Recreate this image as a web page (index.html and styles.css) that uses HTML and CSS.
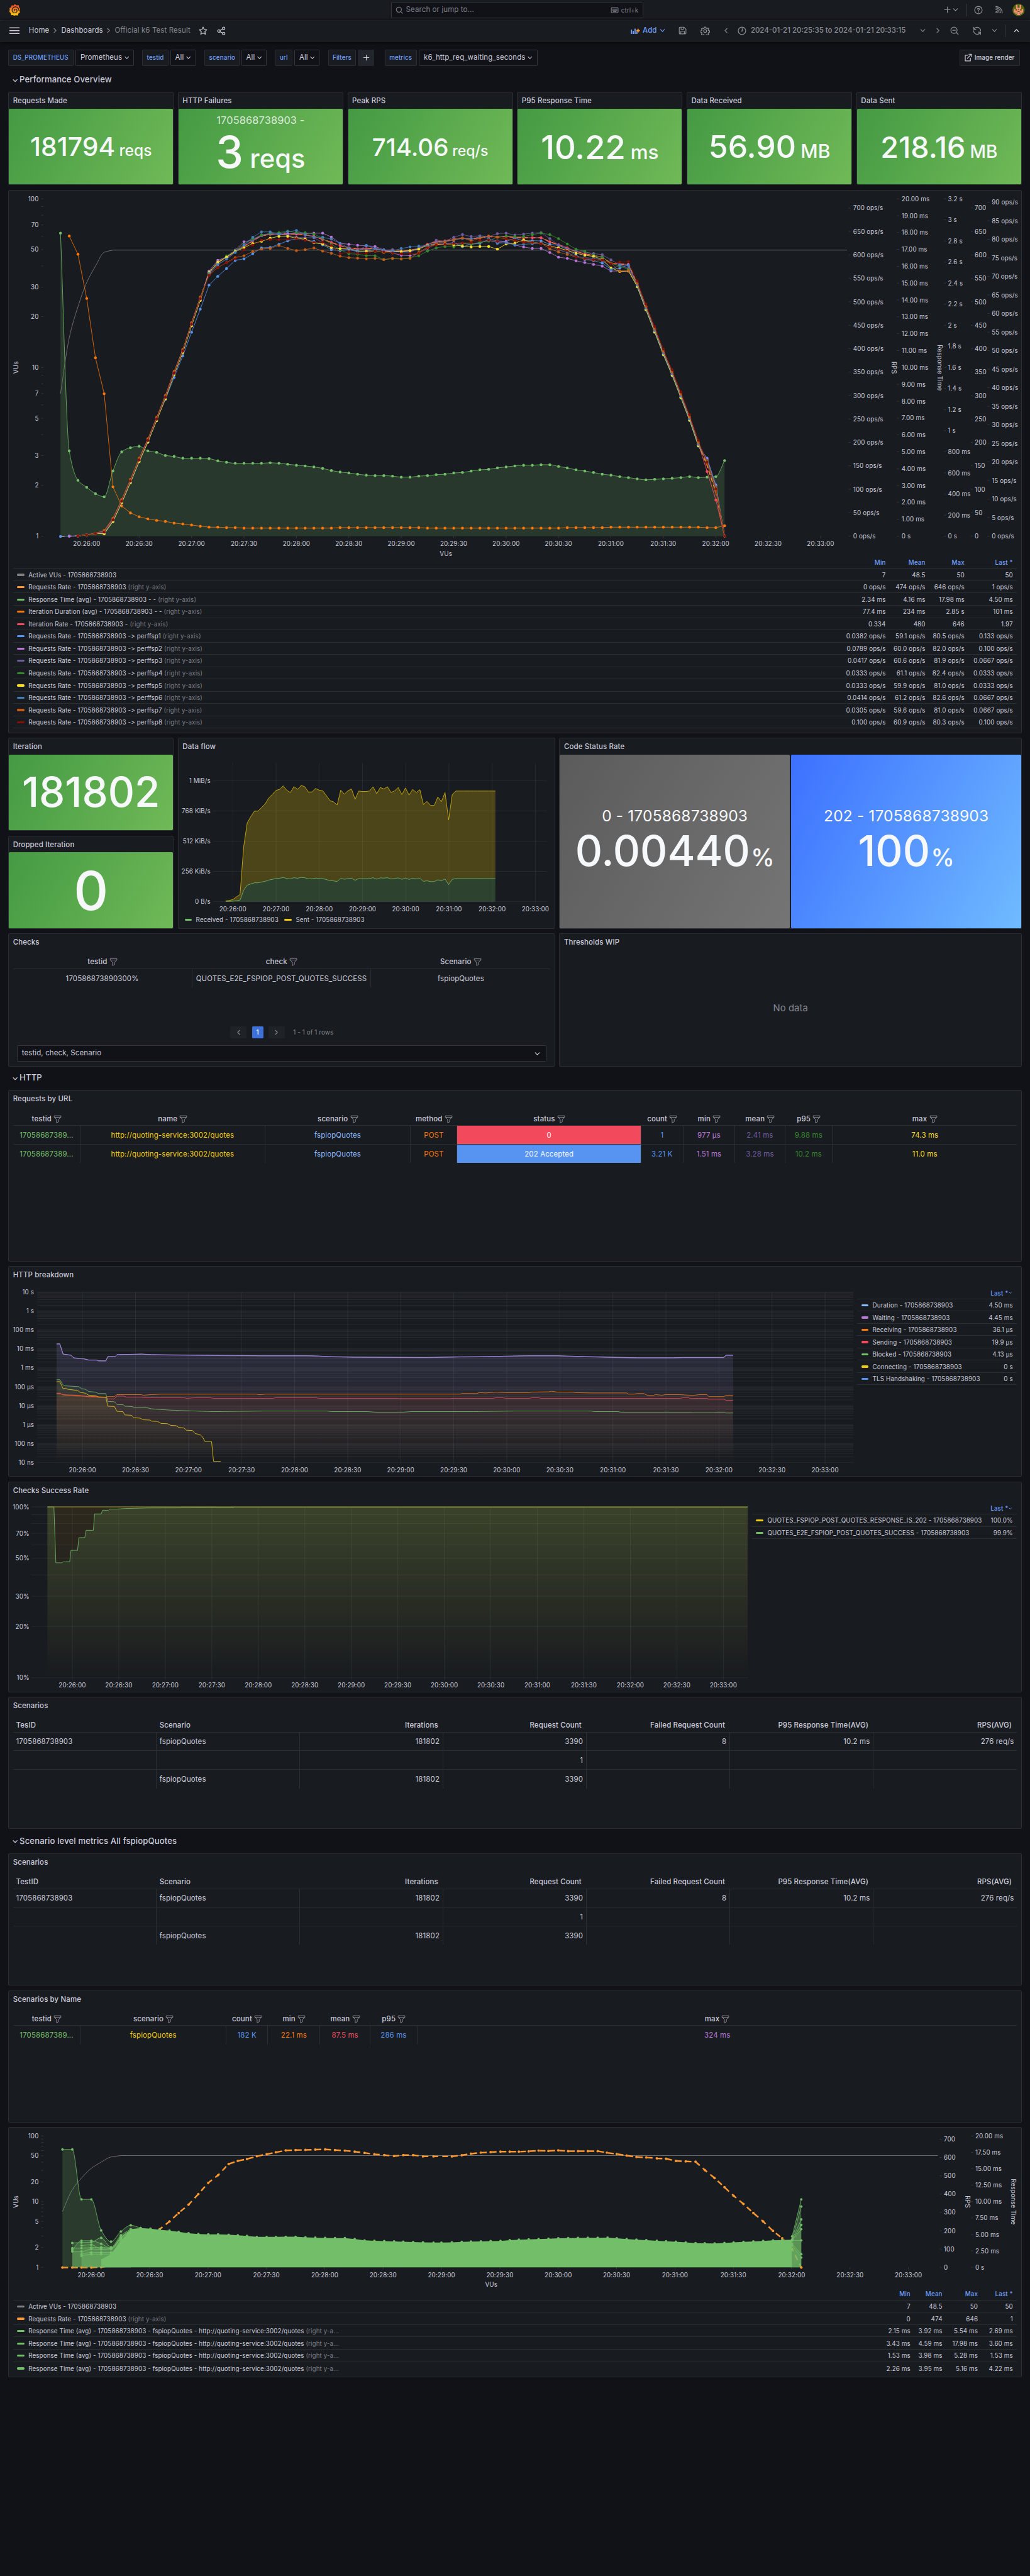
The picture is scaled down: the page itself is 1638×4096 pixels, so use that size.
FILE: index.html
```
<!DOCTYPE html>
<html lang="en">
<head>
<meta charset="utf-8">
<title>Official k6 Test Result - Dashboards - Grafana</title>
<link rel="stylesheet" href="styles.css">
</head>
<body>
<svg class="defs" aria-hidden="true">
  <symbol id="funnel" viewBox="0 0 16 16"><path d="M1.500 1.500h13v2.600L10 8.600V13l-4 2V8.600L1.500 4.100zM1.500 4.300h13"/></symbol>
  <symbol id="down" viewBox="0 0 16 16"><path d="M4 6l4 4 4-4"/></symbol>
  <symbol id="up" viewBox="0 0 16 16"><path d="M4 10l4-4 4 4"/></symbol>
  <symbol id="left" viewBox="0 0 16 16"><path d="M10 4L6 8l4 4"/></symbol>
  <symbol id="right" viewBox="0 0 16 16"><path d="M6 4l4 4-4 4"/></symbol>
</svg>
<div class="page">
<header class="topbar">
  <svg class="logo" viewBox="0 0 24 24">
    <defs><linearGradient id="lg" x1="0" y1="1" x2="0" y2="0"><stop offset="0" stop-color="#fcc20c"/><stop offset=".25" stop-color="#fbb00e"/><stop offset=".8" stop-color="#f05a28"/></linearGradient></defs>
    <path fill="url(#lg)" d="M12.500 0l2.500 2.600 5-.2.900 4.300 2.300 3.500-1 2.600.3 4.300-3 2.200-1.300 4-4-.6-3.500.9-2-1.200-4 .4-.5-4.300L1 15.500l1-3.500-.8-3.500L4.600 6.600 5.600 2.800l4 .1z"/>
    <path fill="none" stroke="#181b1f" stroke-width="1.500" stroke-linecap="round" d="M20.500 13.500C20.800 8.500 17 5.700 13.200 5.800c-4 .1-6.700 3.200-6.600 6.600.1 3.400 2.700 5.700 5.600 5.600 2.800-.1 4.600-2.100 4.500-4.300-.1-2.200-1.800-3.500-3.500-3.400-1.500.1-2.500 1.200-2.400 2.400.1.900.8 1.500 1.600 1.400"/>
  </svg>
  <div class="search">
    <svg class="ic" viewBox="0 0 16 16"><circle cx="7" cy="7" r="5.300"/><path d="M11 11l3.500 3.500"/></svg>
    <span>Search or jump to...</span>
    <svg class="ic kbd" viewBox="0 0 16 16"><rect x="1" y="2.500" width="14" height="11" rx="1.500"/><path d="M3.500 5.500h9M3.500 8h9" stroke-dasharray="1.500 1"/><path d="M5 11h6"/></svg>
    <span class="key">ctrl+k</span>
  </div>
  <div class="top-actions">
    <svg class="ic plus" viewBox="0 0 16 16"><path d="M8 2.500v11M2.500 8h11"/></svg>
    <svg class="ic dn"><use href="#down"/></svg>
    <i class="vr"></i>
    <svg class="ic help" viewBox="0 0 16 16"><circle cx="8" cy="8" r="6.800"/><path d="M6.200 6.500c0-2.400 3.600-2.300 3.600 0C9.800 7.800 8 7.800 8 9.300M8 11v.9"/></svg>
    <svg class="ic rss" viewBox="0 0 16 16"><circle cx="3.600" cy="12.600" r="1.500"/><path d="M2 7.500c3.500 0 6.500 3 6.500 6.500M2 4.500c5.300 0 9.500 4.200 9.500 9.500M2 1.600c7 0 12.400 5.400 12.400 12.400"/></svg>
    <svg class="avatar" viewBox="0 0 24 24"><circle cx="12" cy="12" r="12" fill="#4e6b0b"/><path fill="#ff8b7b" d="M7 2h3v6h4V2h3v8h-2v3h3v-3h3v7h-3v3h-3v2H9v-2H6v-3H3v-7h3v3h3v-3H7z"/><path fill="#4e6b0b" d="M10 14h4v2h-4zM8 17h2v2H8zM14 17h2v2h-2zM11 10h2v2h-2z"/></svg>
  </div>
</header>

<nav class="navbar">
  <svg class="menu" viewBox="0 0 20 14"><path d="M0 1.500h20M0 7h20M0 12.500h20"/></svg>
  <span class="crumb home">Home</span><svg class="ic sep"><use href="#right"/></svg>
  <span class="crumb dash">Dashboards</span><svg class="ic sep"><use href="#right"/></svg>
  <span class="crumb cur">Official k6 Test Result</span>
  <svg class="ic star" viewBox="0 0 16 16"><path d="M8 1.200l2 4.400 4.800.6-3.500 3.300.9 4.800L8 12l-4.200 2.300.9-4.800L1.200 6.200 6 5.600z"/></svg>
  <svg class="ic share" viewBox="0 0 16 16"><circle cx="3.600" cy="8.500" r="2.200"/><circle cx="12.300" cy="3.400" r="2.200"/><circle cx="12.300" cy="13" r="2.200"/><path d="M5.500 7.400l4.900-2.900M5.500 9.600l4.900 2.600"/></svg>
  <div class="tools">
    <svg class="addic" viewBox="0 0 18 14"><path d="M1.500 13.500V5M5 13.500V7.500M8.500 13.500V3M12 13.500V9" stroke="#6e9fff" stroke-width="2.300"/><path d="M14.300 3.500v7M11 7h6.800" stroke="#ff9830" stroke-width="2.300"/></svg>
    <span class="add">Add</span><svg class="ic addn"><use href="#down"/></svg>
    <svg class="ic save" viewBox="0 0 16 16"><path d="M1.500 3a1.500 1.500 0 0 1 1.500-1.500h7.500l4 4V13a1.500 1.500 0 0 1-1.500 1.500H3A1.500 1.500 0 0 1 1.500 13zM5 1.500v4h5v-4M4.500 14.500v-5h7v5"/></svg>
    <svg class="ic gear" viewBox="0 0 16 16"><circle cx="8" cy="8" r="2.500"/><path d="M6.800 1.200h2.400l.4 2 1.300.6 1.800-1.100 1.600 1.600-1.100 1.800.6 1.200 2 .5v2.300l-2 .5-.6 1.300 1.100 1.800-1.600 1.600-1.800-1.100-1.300.6-.4 2H6.800l-.5-2-1.200-.6-1.900 1.100-1.600-1.600 1.100-1.800-.6-1.300-1.900-.5V7.800l1.900-.5.600-1.200-1.100-1.800 1.600-1.600 1.900 1.100 1.200-.6z"/></svg>
    <svg class="ic lt"><use href="#left"/></svg>
    <svg class="ic clock" viewBox="0 0 16 16"><circle cx="8" cy="8" r="6.800"/><path d="M8.500 4v4.500H6.500"/></svg>
    <span class="range">2024-01-21 20:25:35 to 2024-01-21 20:33:15</span>
    <svg class="ic rdn"><use href="#down"/></svg>
    <svg class="ic rt"><use href="#right"/></svg>
    <svg class="ic zo" viewBox="0 0 16 16"><circle cx="7" cy="7" r="5.700"/><path d="M11.200 11.200l3.600 3.600M4.500 7h5"/></svg>
    <svg class="ic sync" viewBox="0 0 16 16"><path d="M1.800 1.500v4h4M2 5.500C4 1 10 .3 13 4c1 1.300 1.400 2.500 1.400 4M14.200 14.500v-4h-4M14 10.500C12 15 6 15.700 3 12c-1-1.300-1.400-2.500-1.400-4"/></svg>
    <svg class="ic sdn"><use href="#down"/></svg>
    <i class="vr"></i>
    <svg class="ic upc"><use href="#up"/></svg>
  </div>
</nav>

<main>
  <div class="vars">
    <span class="lab" style="width:127px">DS_PROMETHEUS</span><span class="val" style="width:113px">Prometheus<svg class="ic"><use href="#down"/></svg></span>
    <span class="lab" style="width:51px">testid</span><span class="val" style="width:50px">All<svg class="ic"><use href="#down"/></svg></span>
    <span class="lab" style="width:68px">scenario</span><span class="val" style="width:49px">All<svg class="ic"><use href="#down"/></svg></span>
    <span class="lab" style="width:34px">url</span><span class="val" style="width:49px">All<svg class="ic"><use href="#down"/></svg></span>
    <span class="lab" style="width:54px">Filters</span><span class="plusbtn"><svg class="ic" viewBox="0 0 16 16"><path d="M8 3v10M3 8h10"/></svg></span>
    <span class="lab" style="width:63px">metrics</span><span class="val" style="width:230px">k6_http_req_waiting_seconds<svg class="ic"><use href="#down"/></svg></span>
    <a class="render"><svg class="ic" viewBox="0 0 16 16"><path d="M7 3.500H2.500v11h10V9M9.500 1.500h5v5M14 2L6.500 9.500"/></svg>Image render</a>
  </div>

  <h2 class="row-title first"><svg class="ic"><use href="#down"/></svg>Performance Overview</h2>

  <div class="stats">
    <section class="panel stat"><h3>Requests Made</h3><div class="tile green"><p class="v s50">181794<small>reqs</small></p></div></section>
    <section class="panel stat"><h3>HTTP Failures</h3><div class="tile green"><p class="cap">1705868738903 -</p><p class="v s85">3<small>reqs</small></p></div></section>
    <section class="panel stat"><h3>Peak RPS</h3><div class="tile green"><p class="v s47">714.06<small>req/s</small></p></div></section>
    <section class="panel stat"><h3>P95 Response Time</h3><div class="tile green"><p class="v s64">10.22<small>ms</small></p></div></section>
    <section class="panel stat"><h3>Data Received</h3><div class="tile green"><p class="v s61">56.90<small>MB</small></p></div></section>
    <section class="panel stat"><h3>Data Sent</h3><div class="tile green"><p class="v s57">218.16<small>MB</small></p></div></section>
  </div>

  <section class="panel overview">
    <svg id="overview" class="chart" viewBox="17 369 1966 711" height="711"></svg>
    <div class="legend four">
      <div class="lr head"><span></span><b>Min</b><b>Mean</b><b>Max</b><b>Last *</b></div>
      <div class="lr"><span><i style="background:#808080"></i>Active VUs - 1705868738903</span><b>7</b><b>48.5</b><b>50</b><b>50</b></div>
      <div class="lr"><span><i style="background:#ff9830"></i>Requests Rate - 1705868738903 <em>(right y-axis)</em></span><b>0 ops/s</b><b>474 ops/s</b><b>646 ops/s</b><b>1 ops/s</b></div>
      <div class="lr"><span><i style="background:#73bf69"></i>Response Time (avg) - 1705868738903 - - <em>(right y-axis)</em></span><b>2.34 ms</b><b>4.16 ms</b><b>17.98 ms</b><b>4.50 ms</b></div>
      <div class="lr"><span><i style="background:#ff780a"></i>Iteration Duration (avg) - 1705868738903 - - <em>(right y-axis)</em></span><b>77.4 ms</b><b>234 ms</b><b>2.85 s</b><b>101 ms</b></div>
      <div class="lr"><span><i style="background:#f2495c"></i>Iteration Rate - 1705868738903 - <em>(right y-axis)</em></span><b>0.334</b><b>480</b><b>646</b><b>1.97</b></div>
      <div class="lr"><span><i style="background:#5794f2"></i>Requests Rate - 1705868738903 -&gt; perffsp1 <em>(right y-axis)</em></span><b>0.0382 ops/s</b><b>59.1 ops/s</b><b>80.5 ops/s</b><b>0.133 ops/s</b></div>
      <div class="lr"><span><i style="background:#b877d9"></i>Requests Rate - 1705868738903 -&gt; perffsp2 <em>(right y-axis)</em></span><b>0.0789 ops/s</b><b>60.0 ops/s</b><b>82.0 ops/s</b><b>0.100 ops/s</b></div>
      <div class="lr"><span><i style="background:#705da0"></i>Requests Rate - 1705868738903 -&gt; perffsp3 <em>(right y-axis)</em></span><b>0.0417 ops/s</b><b>60.6 ops/s</b><b>81.9 ops/s</b><b>0.0667 ops/s</b></div>
      <div class="lr"><span><i style="background:#37872d"></i>Requests Rate - 1705868738903 -&gt; perffsp4 <em>(right y-axis)</em></span><b>0.0333 ops/s</b><b>61.1 ops/s</b><b>82.4 ops/s</b><b>0.0333 ops/s</b></div>
      <div class="lr"><span><i style="background:#fade2a"></i>Requests Rate - 1705868738903 -&gt; perffsp5 <em>(right y-axis)</em></span><b>0.0333 ops/s</b><b>59.9 ops/s</b><b>81.0 ops/s</b><b>0.0333 ops/s</b></div>
      <div class="lr"><span><i style="background:#447ebc"></i>Requests Rate - 1705868738903 -&gt; perffsp6 <em>(right y-axis)</em></span><b>0.0414 ops/s</b><b>61.2 ops/s</b><b>82.6 ops/s</b><b>0.0667 ops/s</b></div>
      <div class="lr"><span><i style="background:#c15c17"></i>Requests Rate - 1705868738903 -&gt; perffsp7 <em>(right y-axis)</em></span><b>0.0305 ops/s</b><b>59.6 ops/s</b><b>81.0 ops/s</b><b>0.0667 ops/s</b></div>
      <div class="lr"><span><i style="background:#890f02"></i>Requests Rate - 1705868738903 -&gt; perffsp8 <em>(right y-axis)</em></span><b>0.100 ops/s</b><b>60.9 ops/s</b><b>80.3 ops/s</b><b>0.100 ops/s</b></div>
    </div>
  </section>

  <div class="mid">
    <div class="iters">
      <section class="panel stat"><h3>Iteration</h3><div class="tile green"><p class="v s80">181802</p></div></section>
      <section class="panel stat"><h3>Dropped Iteration</h3><div class="tile green"><p class="v s104">0</p></div></section>
    </div>
    <section class="panel">
      <h3>Data flow</h3>
      <svg id="flow" class="chart" viewBox="346 1465 731 311" height="311"></svg>
      <div class="inline-legend"><i style="background:#73bf69"></i><span class="l1">Received - 1705868738903</span><i style="background:#f2cc0c"></i><span>Sent - 1705868738903</span></div>
    </section>
    <section class="panel stat">
      <h3>Code Status Rate</h3>
      <div class="codes">
        <div class="tile grey"><p class="cap30">0 - 1705868738903</p><p class="v s82">0.00440<small>%</small></p></div>
        <div class="tile blue"><p class="cap30">202 - 1705868738903</p><p class="v s82">100<small>%</small></p></div>
      </div>
    </section>
  </div>

  <div class="checks">
    <section class="panel">
      <h3>Checks</h3>
      <div class="table c3">
        <div class="tr th"><span>testid<svg class="fn"><use href="#funnel"/></svg></span><span>check<svg class="fn"><use href="#funnel"/></svg></span><span>Scenario<svg class="fn"><use href="#funnel"/></svg></span></div>
        <div class="tr last"><span>170586873890300%</span><span>QUOTES_E2E_FSPIOP_POST_QUOTES_SUCCESS</span><span>fspiopQuotes</span></div>
      </div>
      <div class="pager"><span class="pg"><svg class="ic"><use href="#left"/></svg></span><span class="pg on">1</span><span class="pg"><svg class="ic"><use href="#right"/></svg></span><span class="info">1 - 1 of 1 rows</span></div>
      <div class="select">testid, check, Scenario<svg class="ic"><use href="#down"/></svg></div>
    </section>
    <section class="panel">
      <h3>Thresholds WIP</h3>
      <div class="nodata">No data</div>
    </section>
  </div>

  <h2 class="row-title http"><svg class="ic"><use href="#down"/></svg>HTTP</h2>

  <section class="panel urls">
    <h3>Requests by URL</h3>
    <div class="table c10">
      <div class="tr th"><span>testid<svg class="fn"><use href="#funnel"/></svg></span><span>name<svg class="fn"><use href="#funnel"/></svg></span><span>scenario<svg class="fn"><use href="#funnel"/></svg></span><span>method<svg class="fn"><use href="#funnel"/></svg></span><span>status<svg class="fn"><use href="#funnel"/></svg></span><span>count<svg class="fn"><use href="#funnel"/></svg></span><span>min<svg class="fn"><use href="#funnel"/></svg></span><span>mean<svg class="fn"><use href="#funnel"/></svg></span><span>p95<svg class="fn"><use href="#funnel"/></svg></span><span>max<svg class="fn"><use href="#funnel"/></svg></span></div>
      <div class="tr"><span class="t-green">17058687389...</span><span class="t-yellow">http://quoting-service:3002/quotes</span><span class="t-sky">fspiopQuotes</span><span class="t-orange">POST</span><span class="bg-red">0</span><span class="t-blue">1</span><span class="t-violet">977 µs</span><span class="t-purple">2.41 ms</span><span class="t-dgreen">9.88 ms</span><span class="t-lemon">74.3 ms</span></div>
      <div class="tr last"><span class="t-green">17058687389...</span><span class="t-yellow">http://quoting-service:3002/quotes</span><span class="t-sky">fspiopQuotes</span><span class="t-orange">POST</span><span class="bg-blue">202 Accepted</span><span class="t-blue">3.21 K</span><span class="t-violet">1.51 ms</span><span class="t-purple">3.28 ms</span><span class="t-dgreen">10.2 ms</span><span class="t-lemon">11.0 ms</span></div>
    </div>
  </section>

  <section class="panel breakdown">
    <h3>HTTP breakdown</h3>
    <div class="split">
      <svg id="breakdown" class="chart" viewBox="17 2491 1647 375" width="1647" height="375"></svg>
      <div class="legend one">
        <div class="lr head"><span></span><b>Last *<svg class="ic"><use href="#down"/></svg></b></div>
        <div class="lr"><span><i style="background:#8ab8ff"></i>Duration - 1705868738903</span><b>4.50 ms</b></div>
        <div class="lr"><span><i style="background:#b877d9"></i>Waiting - 1705868738903</span><b>4.45 ms</b></div>
        <div class="lr"><span><i style="background:#ff780a"></i>Receiving - 1705868738903</span><b>36.1 µs</b></div>
        <div class="lr"><span><i style="background:#f2495c"></i>Sending - 1705868738903</span><b>19.9 µs</b></div>
        <div class="lr"><span><i style="background:#73bf69"></i>Blocked - 1705868738903</span><b>4.13 µs</b></div>
        <div class="lr"><span><i style="background:#f2cc0c"></i>Connecting - 1705868738903</span><b>0 s</b></div>
        <div class="lr"><span><i style="background:#5794f2"></i>TLS Handshaking - 1705868738903</span><b>0 s</b></div>
      </div>
    </div>
  </section>

  <section class="panel success">
    <h3>Checks Success Rate</h3>
    <div class="split">
      <svg id="success" class="chart" viewBox="17 2909 1443 375" width="1443" height="375"></svg>
      <div class="legend one">
        <div class="lr head"><span></span><b>Last *<svg class="ic"><use href="#down"/></svg></b></div>
        <div class="lr"><span><i style="background:#f2cc0c"></i>QUOTES_FSPIOP_POST_QUOTES_RESPONSE_IS_202 - 1705868738903</span><b>100.0%</b></div>
        <div class="lr"><span><i style="background:#73bf69"></i>QUOTES_E2E_FSPIOP_POST_QUOTES_SUCCESS - 1705868738903</span><b>99.9%</b></div>
      </div>
    </div>
  </section>

  <section class="panel scen">
    <h3>Scenarios</h3>
    <div class="table c7">
      <div class="tr th"><span>TesID</span><span>Scenario</span><span>Iterations</span><span>Request Count</span><span>Failed Request Count</span><span>P95 Response Time(AVG)</span><span>RPS(AVG)</span></div>
      <div class="tr"><span>1705868738903</span><span>fspiopQuotes</span><span>181802</span><span>3390</span><span>8</span><span>10.2 ms</span><span>276 req/s</span></div>
      <div class="tr"><span></span><span></span><span></span><span>1</span><span></span><span></span><span></span></div>
      <div class="tr last"><span></span><span>fspiopQuotes</span><span>181802</span><span>3390</span><span></span><span></span><span></span></div>
    </div>
  </section>

  <h2 class="row-title lvl"><svg class="ic"><use href="#down"/></svg>Scenario level metrics All fspiopQuotes</h2>

  <section class="panel scen">
    <h3>Scenarios</h3>
    <div class="table c7">
      <div class="tr th"><span>TestID</span><span>Scenario</span><span>Iterations</span><span>Request Count</span><span>Failed Request Count</span><span>P95 Response Time(AVG)</span><span>RPS(AVG)</span></div>
      <div class="tr"><span>1705868738903</span><span>fspiopQuotes</span><span>181802</span><span>3390</span><span>8</span><span>10.2 ms</span><span>276 req/s</span></div>
      <div class="tr"><span></span><span></span><span></span><span>1</span><span></span><span></span><span></span></div>
      <div class="tr last"><span></span><span>fspiopQuotes</span><span>181802</span><span>3390</span><span></span><span></span><span></span></div>
    </div>
  </section>

  <section class="panel scen gap">
    <h3>Scenarios by Name</h3>
    <div class="table cn">
      <div class="tr th"><span>testid<svg class="fn"><use href="#funnel"/></svg></span><span>scenario<svg class="fn"><use href="#funnel"/></svg></span><span>count<svg class="fn"><use href="#funnel"/></svg></span><span>min<svg class="fn"><use href="#funnel"/></svg></span><span>mean<svg class="fn"><use href="#funnel"/></svg></span><span>p95<svg class="fn"><use href="#funnel"/></svg></span><span>max<svg class="fn"><use href="#funnel"/></svg></span></div>
      <div class="tr last"><span class="t-green">17058687389...</span><span class="t-yellow">fspiopQuotes</span><span class="t-blue">182 K</span><span class="t-orange">22.1 ms</span><span class="t-red">87.5 ms</span><span class="t-blue">286 ms</span><span class="t-violet">324 ms</span></div>
    </div>
  </section>

  <section class="panel perurl">
    <svg id="perurl" class="chart" viewBox="17 4131 1966 311" height="311"></svg>
    <div class="legend fourb">
      <div class="lr head"><span></span><b>Min</b><b>Mean</b><b>Max</b><b>Last *</b></div>
      <div class="lr"><span><i style="background:#808080"></i>Active VUs - 1705868738903</span><b>7</b><b>48.5</b><b>50</b><b>50</b></div>
      <div class="lr"><span><i style="background:#ff9830"></i>Requests Rate - 1705868738903 <em>(right y-axis)</em></span><b>0</b><b>474</b><b>646</b><b>1</b></div>
      <div class="lr"><span class="long"><i style="background:#73bf69"></i>Response Time (avg) - 1705868738903 - fspiopQuotes - http://quoting-service:3002/quotes <em>(right y-a...</em></span><b>2.15 ms</b><b>3.92 ms</b><b>5.54 ms</b><b>2.69 ms</b></div>
      <div class="lr"><span class="long"><i style="background:#73bf69"></i>Response Time (avg) - 1705868738903 - fspiopQuotes - http://quoting-service:3002/quotes <em>(right y-a...</em></span><b>3.43 ms</b><b>4.59 ms</b><b>17.98 ms</b><b>3.60 ms</b></div>
      <div class="lr"><span class="long"><i style="background:#73bf69"></i>Response Time (avg) - 1705868738903 - fspiopQuotes - http://quoting-service:3002/quotes <em>(right y-a...</em></span><b>1.53 ms</b><b>3.98 ms</b><b>5.28 ms</b><b>1.53 ms</b></div>
      <div class="lr end"><span class="long"><i style="background:#73bf69"></i>Response Time (avg) - 1705868738903 - fspiopQuotes - http://quoting-service:3002/quotes <em>(right y-a...</em></span><b>2.26 ms</b><b>3.95 ms</b><b>5.16 ms</b><b>4.22 ms</b></div>
    </div>
  </section>
</main>
</div>
<script src="charts.js"></script>
</body>
</html>
```
FILE: styles.css
```
* { box-sizing: border-box; }
html { background: #111217; }
body { margin: 0; width: 1638px; height: 4096px; overflow: hidden; background: #111217; }
.page {
  width: 2000px; height: 5000px; zoom: 0.819; overflow: hidden; color: #ccccdc;
  font: 400 14px/1.5 Inter, "Liberation Sans", sans-serif;
  letter-spacing: 0.01071em;
}
h2, h3, p { margin: 0; }
.defs { display: none; }
svg { display: block; flex: none; }
.ic { width: 16px; height: 16px; fill: none; stroke: currentColor; stroke-width: 1.4; stroke-linecap: round; stroke-linejoin: round; }
.fn { width: 16px; height: 16px; margin-left: 4px; fill: none; stroke: #8e8f99; stroke-width: 1.2; stroke-linejoin: round; }

/* header */
.topbar { height: 40px; background: #181b1f; border-bottom: 1px solid #2d2f34; display: flex; align-items: center; padding-left: 17px; }
.logo { width: 23px; height: 24px; }
.search { margin-left: 719px; width: 490px; height: 31px; background: #111217; border: 1px solid #35373d; border-radius: 2px; display: flex; align-items: center; color: #7f808b; padding: 0 8px; }
.search .ic { width: 15px; height: 15px; margin-right: 5px; }
.search .kbd { margin-left: auto; width: 16px; }
.search .key { font-size: 12px; }
.top-actions { flex: 1; display: flex; align-items: center; color: #8e8f99; }
.plus { margin-left: 582px; }
.dn { margin-left: 1px; }
.top-actions .vr { margin-left: 13px; }
.vr { width: 1px; height: 24px; background: #35373d; }
.help { width: 17px; height: 17px; margin-left: 14px; }
.rss { margin-left: 23px; }
.avatar { width: 24px; height: 24px; margin-left: 18px; }

.navbar { height: 41px; background: #181b1f; border-bottom: 1px solid #2d2f34; display: flex; align-items: center; padding-left: 18px; box-shadow: 0 1px 8px #000; }
.menu { width: 20px; height: 14px; stroke: #ccccdc; stroke-width: 2; margin-right: 18px; }
.sep { margin: 0 4px; color: #8e8f99; }
.home { width: 39px; }
.dash { width: 80px; }
.cur { width: 146px; color: #85868f; }
.crumb { white-space: nowrap; }
.star { margin-left: 17px; width: 17px; height: 17px; }
.share { margin-left: 18px; width: 17px; height: 17px; }
.tools { flex: 1; display: flex; align-items: center; margin-left: 787px; color: #8e8f99; }
.addic { width: 18px; height: 14px; fill: none; }
.add { color: #6e9fff; font-weight: 500; width: 29px; margin-left: 5px; }
.addn { color: #6e9fff; margin-left: 1px; }
.save { margin-left: 24px; }
.gear { margin-left: 27px; width: 18px; height: 18px; }
.lt { margin-left: 23px; }
.clock { margin-left: 14px; width: 17px; height: 17px; }
.range { margin-left: 9px; width: 316px; font-weight: 500; white-space: nowrap; letter-spacing: 0; }
.rdn { margin-left: 10px; }
.rt { margin-left: 13px; }
.zo { margin-left: 16px; width: 17px; height: 17px; }
.sync { margin-left: 27px; width: 17px; height: 17px; }
.sdn { margin-left: 18px; }
.tools .vr { margin-left: 12px; }
.upc { margin-left: 13px; color: #ccccdc; stroke-width: 1.7; }

main { padding: 15px 16px 0; }
.vars { display: flex; height: 32px; }
.lab, .val, .render { height: 32px; border-radius: 2px; display: flex; align-items: center; padding-left: 8px; white-space: nowrap; border: 1px solid #2c2e33; }
.lab { background: #181b1f; color: #6e9fff; font-size: 12px; font-weight: 500; margin-right: 4px; }
.val { background: #111217; border-color: #34363c; margin-right: 16px; }
.val .ic { width: 14px; height: 14px; margin-left: 2px; }
.plusbtn { width: 32px; height: 32px; background: #22252b; border-radius: 2px; margin-right: 20px; display: flex; align-items: center; justify-content: center; }
.render { margin-left: auto; margin-right: 4px; width: 117px; background: #181b1f; font-size: 12px; font-weight: 500; }
.render .ic { margin-right: 4px; }

.row-title { display: flex; align-items: center; font-size: 16px; font-weight: 500; padding-left: 6px; }
.row-title .ic { width: 15px; height: 15px; margin-right: 1px; margin-top: 2px; stroke-width: 1.7; }
.first { height: 50.3px; padding-top: 4px; }
.http { height: 46.5px; }
.lvl { height: 47px; }

.panel { background: #181b1f; border: 1px solid #2b2e33; border-radius: 2px; }
.panel h3 { height: 32px; line-height: 32px; font-size: 14px; font-weight: 500; padding-left: 8px; }

/* stat tiles */
.stats { display: grid; grid-template-columns: repeat(6, 1fr); gap: 8px; height: 181px; }
.stat { display: flex; flex-direction: column; }
.tile { flex: 1; border-radius: 2px; display: flex; flex-direction: column; align-items: center; justify-content: center; color: #f7f8fa; white-space: nowrap; padding-top: 2px; }
.green { background: linear-gradient(120deg, #449a43, #70b957); }
.grey { background: linear-gradient(120deg, #5b5b5b, #757575); }
.blue { background: linear-gradient(120deg, #3c70ff, #70bbff); }
.v { line-height: 1.2; font-weight: 500; letter-spacing: 0; }
.v small { font-size: 60%; margin-left: 0.25em; }
.cap { font-size: 20px; line-height: 24px; color: rgba(247,248,250,.85); margin-top: -2px; }
.cap30 { font-size: 30px; line-height: 36px; }
.s47 { font-size: 47px; } .s50 { font-size: 50px; } .s57 { font-size: 57px; } .s61 { font-size: 61px; }
.s64 { font-size: 64px; } .s80 { font-size: 80px; } .s82 { font-size: 82px; } .s85 { font-size: 85px; } .s104 { font-size: 104px; }
.codes { flex: 1; display: flex; gap: 3px; }
.codes .v small { font-size: 56%; margin-left: 0.04em; }

.overview { margin-top: 9px; height: 1055.3px; }
.chart { width: 100%; overflow: visible; }
.chart text { fill: #ccccdc; font-size: 12px; letter-spacing: 0.15px; }

/* legends */
.legend { font-size: 12px; padding: 0 8px; }
.lr { display: grid; height: 23.85px; align-items: center; border-bottom: 1px solid #2b2e33; padding: 1px 8px 0; white-space: nowrap; }
.lr span { display: flex; align-items: center; white-space: pre; }
.lr .long { letter-spacing: 0.12px; }
.lr i, .inline-legend i { width: 14px; height: 4px; border-radius: 2px; margin-right: 8px; flex: none; }
.lr b { font-weight: 400; text-align: right; }
.lr em { font-style: normal; color: #7c7d87; }
.lr.head b { color: #6e9fff; font-weight: 500; }
.lr.end { border: 0; }
.four .lr { grid-template-columns: 1fr 90px 77px 76px 94px; }
.fourb .lr { grid-template-columns: 1fr 90px 62px 69px 68px; height: 23.95px; }
.one { flex: 1; padding: 7px 8px 0 0; }
.one .lr { grid-template-columns: 1fr auto; }
.one b { display: flex; align-items: center; justify-content: flex-end; }
.one .ic { width: 9px; height: 9px; stroke-width: 2; }
.inline-legend { display: flex; align-items: center; font-size: 12px; height: 20px; padding-left: 12px; }
.inline-legend .l1 { width: 172px; }

.mid { margin-top: 9px; height: 370.4px; display: grid; grid-template-columns: 321.3px 732.7px 1fr; gap: 8px; }
.iters { display: grid; grid-template-rows: 1fr 1fr; gap: 9px; }
.mid .panel h3 { height: 31px; }

.checks { margin-top: 9px; height: 258px; display: grid; grid-template-columns: 1062px 1fr; gap: 8px; }
.table { padding: 0 8px; }
.tr { display: grid; height: 36.2px; border-bottom: 1px solid #2b2e33; }
.tr.last { border-bottom: 0; }
.tr span { display: flex; align-items: center; justify-content: center; border-right: 1px solid #2b2e33; padding-top: 2px; white-space: nowrap; overflow: hidden; }
.tr span:last-child { border-right: 0; }
.tr.th { height: 36px; padding-top: 9px; }
.tr.th span { border-right: 0; font-weight: 500; }
.c3 .tr { grid-template-columns: 1fr 1fr 1fr; }
.c10 .tr { grid-template-columns: 131.4px 358.1px 283px 90.5px 357.2px 81.4px 101px 96.7px 92.3px 1fr; }
.c7 .tr { grid-template-columns: repeat(7, 1fr); }
.cn .tr { grid-template-columns: 131.6px 282.8px 81px 101.4px 97px 91.8px 1fr; }
.c7 .tr span { justify-content: flex-end; padding: 2px 6px 0; }
.c7 .tr span:nth-child(-n+2) { justify-content: flex-start; }
.c7 .tr.th span:nth-child(n+3) { padding-right: 10px; }
.t-green { color: #73bf69; } .t-yellow { color: #f2cc0c; } .t-sky { color: #8ab8ff; } .t-orange { color: #ff780a; }
.t-blue { color: #5794f2; } .t-violet { color: #b877d9; } .t-purple { color: #705da0; } .t-dgreen { color: #37872d; }
.t-lemon { color: #fade2a; } .t-red { color: #f2495c; }
.bg-red { background: #f2495c; color: #f7f8fa; } .bg-blue { background: #5794f2; color: #f7f8fa; }

.pager { display: flex; height: 24px; margin-top: 75px; padding-left: 430px; align-items: center; font-size: 12px; }
.pg { width: 32px; height: 24px; border-radius: 2px; background: #1f2227; display: flex; align-items: center; justify-content: center; color: #8e8f99; }
.pg.on { width: 22px; margin: 0 10px; background: #3d71d9; color: #fff; font-weight: 500; }
.info { margin-left: 16px; color: #85868f; }
.select { margin: 13px 16px 0; height: 32px; background: #111217; border: 1px solid #34363c; border-radius: 2px; padding: 0 8px; display: flex; align-items: center; justify-content: space-between; }
.nodata { height: 225px; display: flex; align-items: center; justify-content: center; font-size: 18px; color: #85868f; }

.urls { height: 332.9px; }
.breakdown, .success { margin-top: 9px; height: 409px; }
.split { display: flex; }
.split .chart { width: auto; }
.scen { height: 256.9px; }
.success + .scen, .gap { margin-top: 9px; }
.perurl { margin-top: 9px; height: 485px; }
```
FILE: charts.js
```
const NS = 'http://www.w3.org/2000/svg';
const AXIS = 'rgba(204,204,220,.2)';
const GRID = 'rgba(240,250,255,.09)';

function el(parent, name, attrs) {
  const n = document.createElementNS(NS, name);
  for (const k in attrs) n.setAttribute(k, attrs[k]);
  parent.appendChild(n);
  return n;
}
function label(svg, x, y, str, anchor = 'start', rotate = 0) {
  const t = el(svg, 'text', { x, y: rotate ? y : y + 4.4, 'text-anchor': anchor });
  if (rotate) {
    t.setAttribute('transform', `rotate(${rotate} ${x} ${y})`);
    t.setAttribute('dominant-baseline', 'central');
  }
  t.textContent = str;
}
function line(svg, x1, y1, x2, y2, stroke = GRID) {
  el(svg, 'line', { x1, y1, x2, y2, stroke, 'stroke-width': 1 });
}
const straight = pts => 'M' + pts.map(p => p[0].toFixed(1) + ',' + p[1].toFixed(1)).join('L');

// monotone cubic interpolation, keeps curves free of overshoot
function smooth(pts) {
  const n = pts.length, d = [], m = [];
  for (let i = 0; i < n - 1; i++) d.push((pts[i + 1][1] - pts[i][1]) / (pts[i + 1][0] - pts[i][0]));
  for (let i = 0; i < n; i++) {
    if (i === 0) m.push(d[0]);
    else if (i === n - 1) m.push(d[n - 2]);
    else m.push(d[i - 1] * d[i] <= 0 ? 0 : 2 * d[i - 1] * d[i] / (d[i - 1] + d[i]));
  }
  let s = `M${pts[0]}`;
  for (let i = 0; i < n - 1; i++) {
    const h = (pts[i + 1][0] - pts[i][0]) / 3;
    s += `C${pts[i][0] + h},${pts[i][1] + m[i] * h} ${pts[i + 1][0] - h},${pts[i + 1][1] - m[i + 1] * h} ${pts[i + 1]}`;
  }
  return s;
}
function stroke(svg, d, color, width = 1, dash) {
  const a = { d, fill: 'none', stroke: color, 'stroke-width': width };
  if (dash) a['stroke-dasharray'] = dash;
  el(svg, 'path', a);
}
function dots(svg, pts, color, r = 2.7) {
  pts.forEach(p => el(svg, 'circle', { cx: p[0], cy: p[1], r, fill: color }));
}
function area(svg, d, pts, base, fill, opacity) {
  el(svg, 'path', { d: `${d}L${pts[pts.length - 1][0]},${base}L${pts[0][0]},${base}Z`, fill, 'fill-opacity': opacity });
}
function fade(svg, id, color, y1, y2, top) {
  const g = el(svg, 'linearGradient', { id, gradientUnits: 'userSpaceOnUse', x1: 0, x2: 0, y1, y2 });
  el(g, 'stop', { offset: 0, 'stop-color': color, 'stop-opacity': top });
  el(g, 'stop', { offset: 1, 'stop-color': color, 'stop-opacity': 0 });
  return `url(#${id})`;
}
function times(svg, x0, step, y, count = 15, seconds = 30) {
  for (let i = 0; i < count; i++) {
    const s = i * seconds;
    const mm = 26 + Math.floor(s / 60), ss = String(s % 60).padStart(2, '0');
    label(svg, x0 + i * step, y, `20:${mm}:${ss}`, 'middle');
  }
}
function logTicks(svg, x, base, height) {
  for (let d = 1; d <= 100; d *= 10)
    for (let k = 1; k < 10; k++) {
      if (d * k > 100) return;
      const y = base - height * Math.log10(d * k) / 2;
      line(svg, x, y, x + 4, y, AXIS);
    }
}
function rightAxis(svg, x, tick, base, step, labels) {
  labels.forEach((t, i) => {
    line(svg, tick, base - i * step, tick + 4, base - i * step, AXIS);
    label(svg, x, base - i * step, t);
  });
}
const range = (n, f) => Array.from({ length: n }, (_, i) => f(i));

/* Performance overview */
(function () {
  const svg = document.getElementById('overview');
  const X = i => 117.4 + 16.97 * i, Y = v => 360 + v * 0.47194;
  const series = (ys, from = 0) => ys.map((v, i) => [X(i + from), Y(v)]);
  const base = 1040;
  logTicks(svg, 80, base, 655);
  [100, 70, 50, 30, 20, 10, 7, 5, 3, 2, 1].forEach(v => label(svg, 75, base - 327.5 * Math.log10(v), v, 'end'));
  label(svg, 31, 712.5, 'VUs', 'middle', -90);
  label(svg, 866, 1074.5, 'VUs', 'middle');
  range(15, i => line(svg, 168.4 + i * 101.8, 1040, 168.4 + i * 101.8, 1044, AXIS));
  times(svg, 168.4, 101.8, 1055);
  rightAxis(svg, 1657, 1648, base, 45.5, range(15, i => i * 50 + ' ops/s'));
  rightAxis(svg, 1751, 1742, base, 32.75, range(21, i => i ? i.toFixed(2) + ' ms' : '0 s'));
  rightAxis(svg, 1841, 1833, base, 40.94, range(17, i => i === 0 ? '0 s' : i < 5 ? i * 200 + ' ms' : +(i * 0.2).toFixed(1) + ' s'));
  rightAxis(svg, 1893, 1885, base, 45.5, range(15, i => i * 50));
  rightAxis(svg, 1926, 1918, base, 36.02, range(19, i => i * 5 + ' ops/s'));
  label(svg, 1737, 713, 'RPS', 'middle', 90);
  label(svg, 1826, 713, 'Response Time', 'middle', 90);

  const resp = series([194,1090,1211,1240,1266,1279,1173,1094,1077,1071,1090,1096,1109,1113,1120,1120,1120,1122,1131,1137,1141,1141,1141,1141,1139,1141,1145,1149,1152,1156,1162,1171,1177,1181,1186,1190,1192,1192,1194,1198,1198,1194,1192,1188,1186,1181,1179,1173,1168,1166,1160,1156,1152,1149,1149,1147,1147,1154,1160,1168,1173,1179,1186,1190,1196,1200,1205,1209,1207,1205,1203,1200,1196,1200,1198,1196,1130]);
  area(svg, smooth(resp), resp, base, '#73bf69', 0.18);

  stroke(svg, smooth(series([855,625,497,397,330,273,264])) + 'L1645,' + Y(264), '#808080');

  const rate = [1442,1441,1440,1436,1430,1422,1372,1295,1212,1125,1045,957,867,768,677,567,462,358,315,293,268,249,226,205,199,198,198,198,201,207,220,232,246,254,259,258,256,268,268,268,266,256,240,230,226,220,215,218,213,208,210,208,212,213,213,213,230,242,255,270,280,286,293,318,322,322,405,500,592,685,770,862,955,1060,1150,1260,1440];
  stroke(svg, smooth(resp), '#73bf69'); dots(svg, resp, '#73bf69');
  const dur = series([206,281,463,707,855,1238,1317,1345,1361,1370,1376,1380,1387,1391,1395,1400,1404,1404,1406,1406,...Array(11).fill(1408),...Array(10).fill(1406),...Array(16).fill(1408),...Array(5).fill(1406),...Array(11).fill(1404),1406,1406,1398], 1);
  stroke(svg, straight(dur), '#ff780a'); dots(svg, dur, '#ff780a');

  stroke(svg, straight(series(rate)), '#ff9830', 2, '8 6');
  const it = rate.map((v, i) => i === 74 ? 1175 : i === 75 ? 1292 : v).slice(2);
  stroke(svg, straight(series(it, 2)), '#f2495c', 1.2); dots(svg, series(it, 2), '#f2495c');

  const nodes = [
    ['#5794f2', 10, [408,372,340,306,300,279,255,253,240,226,217,222,228,242,262,266,262,270,268,262,264,270,272,272,256,245,240,240,232,250,240,236,220,226,228,215,225,225,226,240,245,262,285,303,307,317,343,338,325]],
    ['#b877d9', 6, [350,306,292,264,230,222,202,197,200,197,195,196,194,194,210,236,240,244,246,249,263,276,285,287,276,256,240,238,236,236,240,232,224,232,230,243,251,257,257,274,293,298,308,315,323,330,350,350,350]],
    ['#705da0', -3, [365,325,300,270,245,224,205,195,200,203,211,213,213,233,253,258,262,262,262,258,264,262,268,268,255,243,223,228,211,200,208,205,208,196,194,202,198,194,192,217,243,258,268,272,278,283,304,325,340]],
    ['#37872d', 8, [358,316,288,266,240,218,202,195,192,186,192,192,198,215,240,262,279,281,287,287,303,299,301,295,287,268,255,249,251,236,240,232,227,210,206,208,208,200,194,200,217,239,260,269,285,293,318,330,343]],
    ['#fade2a', 9, [356,314,293,270,254,237,228,215,207,207,215,219,234,239,254,258,257,268,268,268,273,268,270,266,260,244,240,240,243,247,251,249,249,260,239,236,222,232,236,247,255,265,277,285,290,302,337,352,350]],
    ['#447ebc', 3, [360,323,301,274,243,211,189,189,198,188,183,200,211,211,219,236,256,270,244,258,264,268,257,251,247,246,235,228,222,216,218,210,215,236,234,243,240,238,236,250,262,275,290,295,298,304,345,325,328]],
    ['#c15c17', -5, [366,336,315,295,287,270,260,257,245,257,266,262,255,268,277,289,295,297,300,298,303,298,300,298,274,252,238,230,222,214,226,215,206,211,218,225,229,233,236,258,272,282,292,300,305,306,318,350,348]],
    ['#890f02', 2, [368,336,316,300,263,243,223,221,221,219,217,223,232,232,245,278,272,277,277,268,272,276,279,278,278,254,243,241,236,234,233,224,222,228,217,222,232,232,238,250,260,267,292,298,303,305,320,313,311]]
  ];
  nodes.forEach(([color, off, mid], n) => {
    const from = n === 0 ? 0 : n === 1 ? 1 : 2;
    const ys = rate.map((v, i) => {
      if (i >= 17 && i < 66) return mid[i - 17];
      if (i < 5 || i > 75) return v;
      if (n === 0 && i > 10 && i < 17) return v + [5, 12, 20, 22, 35, 45][i - 11];
      if (n === 7 && i > 65) return v - 14;
      if (i > 73) return v - 30 + n * 4;
      return v + off;
    }).slice(from);
    stroke(svg, straight(series(ys, from)), color); dots(svg, series(ys, from), color);
  });
})();

/* Data flow */
(function () {
  const svg = document.getElementById('flow');
  const X = v => v * 0.63776, Y = v => 1080 + v * 0.45918;
  ['0 B/s', '256 KiB/s', '512 KiB/s', '768 KiB/s', '1 MiB/s'].forEach((t, i) => {
    const y = 1750.4 - i * 58.8;
    line(svg, 413, y, 1062, y);
    label(svg, 408, y, t, 'end');
  });
  range(8, i => line(svg, 451.5 + i * 84, 1481, 451.5 + i * 84, 1754));
  times(svg, 451.5, 84, 1765, 8, 60);
  const ys = [1457,1455,1451,1440,1430,1228,1127,1100,1077,1077,1062,1046,1021,1006,989,985,970,989,998,973,985,968,974,996,996,981,988,991,1011,1032,1038,1051,988,1005,991,983,1027,992,994,994,992,974,1003,977,983,974,998,991,977,1007,979,1009,985,998,986,1049,1036,1053,1053,1017,1037,998,1114,1007,992,992,992,992,992,992,992,992,992,992,992,992];
  const step = (1508 - 686) / (ys.length - 1);
  const sent = ys.map((v, i) => [X(686 + i * step), Y(v)]);
  const recv = ys.map((v, i) => [X(686 + i * step), Y(1460 - (1460 - v) * 0.208)]);
  el(svg, 'path', { d: straight(sent.concat([...recv].reverse())) + 'Z', fill: '#f2cc0c', 'fill-opacity': 0.24 });
  area(svg, straight(recv), recv, 1750.4, '#73bf69', 0.24);
  stroke(svg, straight(recv), '#73bf69');
  stroke(svg, straight(sent), '#e0bd0c');
})();

/* HTTP breakdown */
(function () {
  const svg = document.getElementById('breakdown');
  const map = a => range(a.length / 2, i => [a[2 * i] * 1.27551, 2440 + a[2 * i + 1] * 0.54847]);
  const top = 2507.4, dec = 36.75, bottom = top + 9 * dec;
  ['10 s', '1 s', '100 ms', '10 ms', '1 ms', '100 µs', '10 µs', '1 µs', '100 ns', '10 ns'].forEach((t, i) => {
    label(svg, 66, top + i * dec, t, 'end');
    line(svg, 72, top + i * dec, 1657, top + i * dec);
    if (i < 9) for (let k = 2; k < 10; k++) {
      const y = top + (i + 1 - Math.log10(k)) * dec;
      line(svg, 72, y, 1657, y);
    }
  });
  range(15, i => line(svg, 160 + i * 103, top, 160 + i * 103, bottom + 4));
  times(svg, 160, 103, 2853);
  const waiting = [86,307,91,307,96,343,108,347,112,356,121,359,128,360,135,364,147,364,150,367,161,367,164,352,175,352,178,345,202,344,215,343,230,345,260,346,340,348,400,349,470,349,485,350,500,352,540,354,650,355,700,353,740,352,780,350,800,349,850,349,862,350,890,352,925,354,970,356,1025,356,1040,355,1102,355,1105,347,1116,347];
  const list = [
    ['#8ab8ff', waiting.map((v, i) => i % 2 ? v - 0.8 : v)],
    ['#b877d9', waiting],
    ['#ff780a', [86,481,91,481,96,487,110,490,135,492,161,495,164,493,174,493,178,486,215,486,218,488,230,486,245,484,390,484,395,486,405,484,700,484,703,482,725,482,730,479,740,480,755,477,770,479,805,479,810,477,835,476,840,474,848,477,872,477,876,479,900,480,954,480,957,484,965,484,970,482,980,482,985,488,995,488,998,486,1008,488,1013,486,1034,486,1050,488,1058,488,1064,486,1076,486,1079,493,1102,493,1105,488,1116,488]],
    ['#f2495c', [86,482,91,482,97,486,105,487,120,488,135,494,161,496,164,501,174,501,178,491,188,491,192,495,215,495,218,497,280,497,285,499,295,497,320,497,325,499,415,499,420,497,480,497,487,499,605,499,607,500,685,500,690,499,750,499,755,497,765,497,770,499,805,499,810,497,820,497,823,499,1035,499,1040,497,1048,497,1052,500,1064,499,1076,499,1079,502,1102,502,1105,506,1116,506]],
    ['#73bf69', [86,433,91,433,96,452,100,455,108,456,120,458,124,465,130,467,135,475,145,477,150,482,161,482,164,510,174,511,178,521,188,522,190,527,200,528,205,531,225,533,230,536,245,539,260,541,285,543,325,546,400,544,498,544,505,546,560,546,570,548,615,548,625,546,720,546,780,544,900,544,905,546,940,546,945,548,1048,548,1055,550,1087,550,1093,548,1102,548,1105,551,1116,551]],
    ['#f2cc0c', [86,440,91,440,96,465,100,463,103,467,110,469,118,471,122,478,130,481,135,488,145,489,150,495,161,495,164,527,174,528,178,545,187,546,190,558,200,559,204,568,213,569,218,575,228,576,231,580,240,581,245,588,255,589,260,595,268,596,272,602,280,604,284,612,293,613,297,624,304,627,308,635,312,652,322,652,325,722,336,722]]
  ];
  list.forEach(([c, a], i) => {
    const p = map(a), y0 = Math.min(...p.map(q => q[1]));
    area(svg, straight(p), p, bottom, fade(svg, 'bd' + i, c, y0, bottom, i < 2 ? 0.08 : 0.06), 1);
  });
  list.forEach(([c, a]) => stroke(svg, straight(map(a)), c));
})();

/* Checks success rate */
(function () {
  const svg = document.getElementById('success');
  const top = 2924.9, bottom = 3256.7;
  range(10, i => {
    const v = (i + 1) * 10, y = bottom - (bottom - top) * Math.log10(v / 10);
    line(svg, 61, y, 1452, y);
    if ([10, 20, 30, 50, 70, 100].includes(v)) label(svg, 57, y, v + '%', 'end');
  });
  range(15, i => line(svg, 140.3 + i * 90.3, top, 140.3 + i * 90.3, bottom + 4));
  times(svg, 140.3, 90.3, 3271);
  const a = [72,884.5,82,884.5,85,1082,94,1082,96,1079,106,1078,108,1038,118,1038,120,993,129,993,131,967,142,967,144,909,154,909,156,896,165,896,167,892,178,892,190,890,225,888,355,887,357,885,1138,885];
  const ok = range(a.length / 2, i => [a[2 * i] * 1.27551, 2440 + a[2 * i + 1] * 0.54847]);
  const full = [[92, top], [1452, top]];
  area(svg, straight(full), full, bottom, fade(svg, 'ys', '#f2a00c', top, bottom, 0.1), 1);
  area(svg, straight(ok), ok, bottom, fade(svg, 'gs', '#73bf69', top, bottom, 0.17), 1);
  stroke(svg, straight(ok), '#73bf69');
  stroke(svg, straight(full), '#a89a22', 1.3);
})();

/* Response time per URL */
(function () {
  const svg = document.getElementById('perurl');
  const P = a => range(a.length / 2, i => [a[2 * i] * 1.27551, 4110 + a[2 * i + 1] / 3]);
  const base = 4402.3, green = '#73bf69';
  logTicks(svg, 80, base, 255);
  [100, 50, 20, 10, 5, 2, 1].forEach(v => label(svg, 75, base - 127.5 * Math.log10(v), v, 'end'));
  label(svg, 31, 4275, 'VUs', 'middle', -90);
  label(svg, 954, 4436, 'VUs', 'middle');
  range(15, i => line(svg, 177.3 + i * 113.35, base, 177.3 + i * 113.35, base + 4, AXIS));
  times(svg, 177.3, 113.35, 4417);
  rightAxis(svg, 1833, 1825, base, 35.55, range(8, i => i * 100));
  rightAxis(svg, 1894, 1886, base, 31.88, range(9, i => i ? (i * 2.5).toFixed(2) + ' ms' : '0 s'));
  label(svg, 1879, 4275, 'RPS', 'middle', 90);
  label(svg, 1968, 4275, 'Response Time', 'middle', 90);

  stroke(svg, smooth(P([95,552,110,425,124,357,139,300,154,264,169,234,184,226])) + `L1821,${4110 + 226 / 3}`, '#808080');
  const rate = P([95,878,110,878,124,878,139,878,154,876,169,868,184,835,199,795,214,750,229,700,243,655,258,610,272,560,287,512,302,450,317,385,332,340,348,275,362,257,376,246,391,230,406,218,420,207,435,196,450,194,465,193,480,191,495,190,510,194,525,197,540,203,555,210,570,218,585,223,600,229,614,223,629,223,644,231,660,231,688,231,703,224,717,215,732,209,747,206,762,203,776,203,790,203,805,201,820,197,835,199,850,196,865,200,880,200,895,200,910,200,924,209,939,217,954,226,969,234,984,237,1000,242,1014,244,1029,257,1044,260,1059,262,1073,310,1088,357,1103,410,1117,460,1132,508,1147,560,1162,610,1177,665,1191,708,1206,770,1220,878]);
  stroke(svg, straight(rate), '#ff9830', 3, '11 8');
  dots(svg, rate, '#ff9830', 2.4);

  const body = [199,655,214,648,229,652,243,658,258,663,272,670,287,678,302,683,317,685,332,685,348,687,362,690,376,694,391,700,406,700,420,700,435,699,450,699,465,702,480,704,495,706,510,707,525,707,540,712,555,720,570,722,585,724,600,726,614,728,629,730,644,731,660,733,672,733,688,731,703,729,717,727,732,726,747,724,762,723,776,719,790,716,805,714,820,712,835,710,850,708,865,707,880,706,895,705,910,705,925,704,939,708,954,712,969,716,984,719,1000,722,1014,725,1029,728,1044,732,1059,736,1073,737,1088,738,1103,735,1117,732,1132,729,1147,726,1162,723,1177,720,1191,718,1206,716];
  const layers = [
    [95,190,110,190,124,481,139,481,154,662,169,727,184,668,199,632,214,648],
    [110,735,124,733,139,730,154,705,169,760,184,690,199,655],
    [110,765,124,765,139,762,154,760,169,765,184,700,199,660],
    [110,775,124,722,139,722,154,740,169,765,184,705,199,660],
    [110,785,124,785,139,770,154,772,169,768,184,705,199,660],
    [124,750,139,745,154,770,169,770,184,710,199,665],
    [124,800,139,790,154,790,169,790,184,720,199,670],
    [124,810,139,800,154,800,169,800,184,725,199,670],
    [1206,697,1220,481], [1206,716,1220,523], [1206,716,1220,598], [1206,720,1220,630], [1206,720,1220,655], [1206,720,1220,720], [1206,740,1220,800], [1206,750,1220,820]
  ];
  layers.forEach((l, i) => {
    const p = P(l), d = i < 8 ? smooth(p) : straight(p);
    area(svg, d, p, base, green, 0.2);
    stroke(svg, d, green);
    dots(svg, p, green, 2.4);
  });
  const solid = P([154,830,169,800,184,725].concat(body));
  area(svg, straight(solid), solid, base, green, 1);
  dots(svg, P(body), green, 2.4);
  dots(svg, rate.slice(0, 4), '#ff9830', 2.2);
  dots(svg, rate.slice(-1), '#ff9830', 2.2);
})();
```
